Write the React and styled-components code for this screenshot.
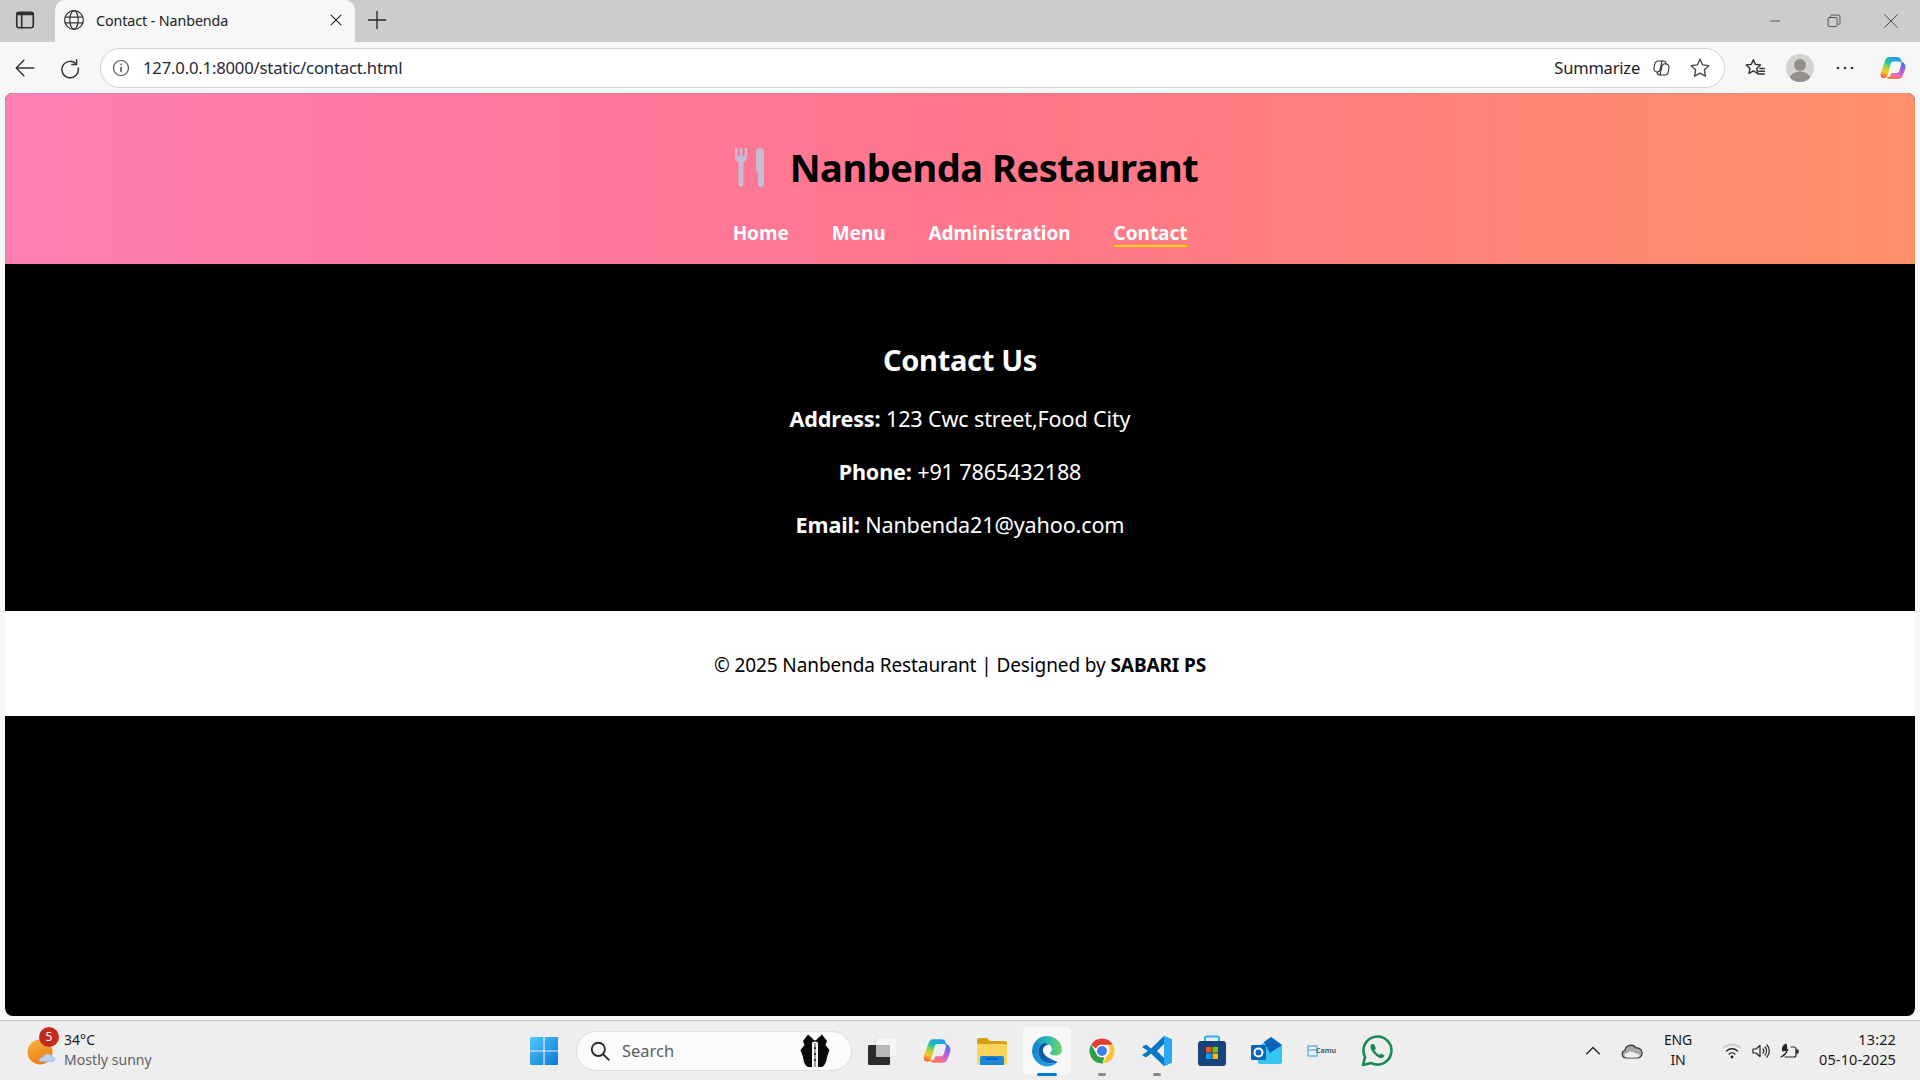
import styled, { createGlobalStyle } from "styled-components";

const GlobalStyle = createGlobalStyle`
  * { box-sizing: border-box; }
  html, body { margin: 0; padding: 0; height: 100%; }
  body { font-family: "Noto Sans", "Open Sans", sans-serif; background: #f7f7f7; overflow: hidden; }
`;

const Screen = styled.div`
  width: 1920px;
  height: 1080px;
  display: flex;
  flex-direction: column;
  background: #f7f7f7;
`;

const TabStrip = styled.div`
  height: 42px;
  flex: none;
  background: #cccccc;
  display: flex;
  align-items: flex-start;
  padding-left: 13px;
`;

const StripButton = styled.div`
  width: ${(p) => p.$w || 24}px;
  height: 42px;
  padding-bottom: 2px;
  display: flex;
  align-items: center;
  justify-content: center;
  flex: none;
`;

const Tab = styled.div`
  width: 300px;
  height: 42px;
  margin-left: 18px;
  margin-right: 8px;
  padding: 0 12px 2px 8px;
  background: #f7f7f7;
  border-radius: 10px 10px 0 0;
  display: flex;
  align-items: center;
  gap: 11px;
`;

const TabTitle = styled.span`
  flex: 1;
  font-size: 14.3px;
  color: #1c1c1c;
  letter-spacing: -0.1px;
`;

const WindowControls = styled.div`
  margin-left: auto;
  display: flex;
  height: 42px;
  align-items: center;
  gap: 43px;
  padding-right: 22px;
`;

const Toolbar = styled.div`
  height: 51px;
  flex: none;
  display: flex;
  align-items: center;
  padding: 0 12px 0 11px;
`;

const ToolButton = styled.div`
  width: ${(p) => p.$w || 28}px;
  height: 40px;
  margin-left: ${(p) => p.$ml || 0}px;
  margin-right: ${(p) => p.$mr || 0}px;
  display: flex;
  align-items: center;
  justify-content: center;
  flex: none;
`;

const AddressBar = styled.div`
  flex: 1;
  height: 40px;
  background: #ffffff;
  border: 1px solid #d0d0d0;
  border-radius: 20px;
  display: flex;
  align-items: center;
  padding: 0 8px 0 10px;
`;

const Url = styled.span`
  flex: 1;
  margin-left: 12px;
  font-size: 16.7px;
  color: #1f2937;
  letter-spacing: -0.2px;
`;

const Summarize = styled.span`
  font-size: 16.5px;
  color: #1c1c1c;
  letter-spacing: -0.2px;
  margin-right: 11px;
`;

const ToolIcons = styled.div`
  display: flex;
  align-items: center;
  margin-left: 14px;
`;

const Avatar = styled.div`
  width: 28px;
  height: 28px;
  margin: 0 15px 0 15px;
  border-radius: 50%;
  background: #d4d3d0;
  overflow: hidden;
  flex: none;
`;

const Page = styled.div`
  height: 923px;
  flex: none;
  margin: 0 5px;
  background: #000000;
  border-radius: 8px;
  overflow: hidden;
  display: flex;
  flex-direction: column;
`;

const Header = styled.header`
  height: 171px;
  flex: none;
  background: linear-gradient(90deg, #ff7eb3, #ff758c, #ff9068);
  display: flex;
  flex-direction: column;
  align-items: center;
  padding-top: 45px;
`;

const Brand = styled.div`
  display: flex;
  align-items: center;
  gap: 26px;
  height: 58px;
  padding-left: 13px;
`;

const Title = styled.h1`
  margin: 0;
  font-size: 38px;
  font-weight: 700;
  color: #000000;
  letter-spacing: -0.45px;
  line-height: 58px;
`;

const Nav = styled.nav`
  display: flex;
  gap: 43px;
  margin-top: 25px;
`;

const NavLink = styled.a`
  font-size: 19px;
  font-weight: 700;
  line-height: 24px;
  color: #ffffff;
  text-decoration: none;
  letter-spacing: -0.05px;
  border-bottom: 2px solid ${(p) => (p.$active ? "#ffd400" : "transparent")};
`;

const ContactSection = styled.main`
  height: 347px;
  flex: none;
  background: #000000;
  color: #ffffff;
  display: flex;
  flex-direction: column;
  align-items: center;
  padding-top: 74px;
`;

const Heading = styled.h2`
  margin: 0 0 22px;
  font-size: 29px;
  font-weight: 700;
  line-height: 44px;
  letter-spacing: -0.3px;
`;

const InfoLine = styled.p`
  margin: 0 0 23px;
  font-size: 21.6px;
  line-height: 30px;
  letter-spacing: -0.15px;
  strong { font-weight: 700; }
`;

const Footer = styled.footer`
  height: 105px;
  flex: none;
  background: #ffffff;
  color: #000000;
  display: flex;
  justify-content: center;
  padding-top: 40px;
  font-size: 19px;
  line-height: 28px;
  letter-spacing: -0.1px;
  strong { font-weight: 700; }
`;

const Taskbar = styled.div`
  margin-top: auto;
  height: 60px;
  flex: none;
  background: #eeeeee;
  border-top: 1px solid #c4c4c4;
  display: flex;
  align-items: center;
  position: relative;
`;

const Weather = styled.div`
  width: 527px;
  flex: none;
  display: flex;
  align-items: center;
  padding-left: 27px;
  gap: 7px;
`;

const WeatherIcon = styled.div`
  position: relative;
  width: 30px;
  height: 34px;
  flex: none;
`;

const Badge = styled.span`
  position: absolute;
  left: 12px;
  top: -7px;
  width: 20px;
  height: 20px;
  border-radius: 50%;
  background: #c42b1c;
  color: #fff;
  font-size: 12px;
  line-height: 20px;
  text-align: center;
`;

const WeatherText = styled.div`
  display: flex;
  flex-direction: column;
  margin-top: -2px;
  font-size: 14px;
  line-height: 20px;
  letter-spacing: 0.05px;
  color: #1a1a1a;
  span + span { color: #5f5f5f; }
`;

const Dock = styled.div`
  display: flex;
  align-items: center;
`;

const DockItem = styled.div`
  width: ${(p) => p.$w || 55}px;
  height: 48px;
  margin: 0 ${(p) => (p.$active ? 3.5 : 0)}px;
  position: relative;
  display: flex;
  align-items: center;
  justify-content: center;
  flex: none;
  border-radius: 5px;
  background: ${(p) => (p.$active ? "#f8f8f8" : "transparent")};
`;

const Dot = styled.span`
  position: absolute;
  bottom: -1px;
  left: 50%;
  transform: translateX(-50%);
  width: ${(p) => (p.$active ? 20 : 8)}px;
  height: 3px;
  border-radius: 2px;
  background: ${(p) => (p.$active ? "#0078d4" : "#8a8a8a")};
`;

const SearchBox = styled.div`
  width: 276px;
  height: 40px;
  margin: 0 2px 0 15px;
  flex: none;
  border-radius: 20px;
  background: #fbfbfb;
  border: 1px solid #dedede;
  display: flex;
  align-items: center;
  padding: 0 21px 0 12px;
  color: #5d5d5d;
  font-size: 16.5px;
  gap: 11px;
  span { flex: 1; }
`;

const CamuMark = styled.span`
  font-size: 7px;
  font-weight: 700;
  color: #4a6070;
  margin-left: -2px;
`;

const Tray = styled.div`
  margin-left: auto;
  display: flex;
  align-items: center;
  padding-right: 24px;
  color: #1a1a1a;
`;

const TraySpacer = styled.span`
  width: 19px;
`;

const Lang = styled.div`
  width: 40px;
  margin: -2px 24px 0 15px;
  text-align: center;
  font-size: 14px;
  line-height: 20px;
  letter-spacing: -0.2px;
`;

const Clock = styled.div`
  margin: -3px 0 0 19px;
  text-align: right;
  font-size: 14.5px;
  line-height: 20px;
  letter-spacing: 0.13px;
`;

const TrayIcons = styled.div`
  display: flex;
  align-items: center;
  gap: 9px;
`;

const Line = ({ size = 20, children, sw = 1.5, color = "#303030" }) => (
  <svg width={size} height={size} viewBox="0 0 20 20" fill="none" stroke={color} strokeWidth={sw} strokeLinecap="round" strokeLinejoin="round">
    {children}
  </svg>
);

const CopilotIcon = ({ size = 28 }) => (
  <svg width={size} height={size} viewBox="0 0 28 28">
    <defs>
      <linearGradient id={`cpl${size}`} x1="0.6" y1="0" x2="0.2" y2="1">
        <stop offset="0" stopColor="#1f9df2" />
        <stop offset="0.3" stopColor="#26c3a8" />
        <stop offset="0.55" stopColor="#a9d63a" />
        <stop offset="0.75" stopColor="#f7c62a" />
        <stop offset="1" stopColor="#f2603a" />
      </linearGradient>
      <linearGradient id={`cpr${size}`} x1="0.8" y1="0" x2="0.3" y2="1">
        <stop offset="0" stopColor="#3d74ea" />
        <stop offset="0.4" stopColor="#a85de6" />
        <stop offset="0.75" stopColor="#ee6aa8" />
        <stop offset="1" stopColor="#f4813a" />
      </linearGradient>
    </defs>
    <path d="M20 7.500c3-.5 6 1.500 6.500 4.500.2 1 0 2-.3 3L24 21c-.7 2.500-2.500 4-5 4h-8c-2 0-3.500-1-4-2.500 1 .7 3 .5 4-.5.8-.8 1.200-2 1.500-3h5c1.500 0 2.500-1 3-2.500l1.500-5c.6-2 .5-3.500-1-4.500z" fill={`url(#cpr${size})`} />
    <path d="M10 3h8c2 0 3.500 1 4 3l.8 3c-1-1-2-1.500-3.500-1.500H15c-2 0-3 1-3.500 3L9 20c-.7 2.500-2 4-4 4-2.500 0-4-2-3.200-5L6 7c.7-2.500 2-4 4-4z" fill={`url(#cpl${size})`} />
  </svg>
);

const WinLogo = () => (
  <svg width="30" height="30" viewBox="0 0 30 30">
    <defs>
      <linearGradient id="winA" x1="0" y1="0" x2="1" y2="1">
        <stop offset="0" stopColor="#52c8fa" />
        <stop offset="1" stopColor="#0a78d8" />
      </linearGradient>
    </defs>
    <path d="M1 2a1 1 0 0 1 1-1h12.400v13.400H1zM15.600 1H28a1 1 0 0 1 1 1v12.400H15.600zM1 15.600h13.400V29H2a1 1 0 0 1-1-1zM15.600 15.600H29V28a1 1 0 0 1-1 1H15.600z" fill="url(#winA)" />
  </svg>
);

const Tuxedo = () => (
  <svg width="30" height="33" viewBox="0 0 30 33">
    <path d="M8 0.500L13 5 12 12v21H8C4.500 31 3.500 27 3 23L0.500 16 4.500 11 3 7z" fill="#0a0a0a" />
    <path d="M22 0.500L17 5l1 7v21h4c3.500-2 4.500-6 5-10l2.500-7-4-5L27 7z" fill="#0a0a0a" />
    <path d="M12 8.500h6V33h-6z" fill="#f4f4f4" />
    <path d="M14.200 9h1.600v24h-1.600z" fill="#8c8c8c" />
    <path d="M8.500 3L15 6.500 21.500 3 21 9 15 7.500 9 9z" fill="#0a0a0a" />
    <circle cx="15" cy="14" r="1" fill="#111" />
    <circle cx="15" cy="20" r="1" fill="#111" />
    <circle cx="15" cy="26" r="1" fill="#111" />
  </svg>
);

const TaskView = () => (
  <svg width="30" height="30" viewBox="0 0 30 30">
    <rect x="9" y="1" width="21" height="20" rx="1" fill="#f5f5f5" stroke="#e2e2e2" />
    <rect x="1" y="9" width="22" height="20" rx="1.500" fill="#2c2c2c" />
    <rect x="9" y="9" width="14" height="12" fill="#b8b8b8" />
  </svg>
);

const FilesIcon = () => (
  <svg width="30" height="28" viewBox="0 0 30 28">
    <path d="M0 3a2 2 0 0 1 2-2h8l3 3h15a2 2 0 0 1 2 2v3H0z" fill="#d99f12" />
    <path d="M0 7h28a2 2 0 0 1 2 2v17a2 2 0 0 1-2 2H2a2 2 0 0 1-2-2z" fill="#fbd45c" />
    <path d="M5 19h20a2 2 0 0 1 2 2v7H3v-7a2 2 0 0 1 2-2z" fill="#1f87d8" />
    <path d="M9 22h12" stroke="#0c5da8" strokeWidth="1.600" />
  </svg>
);

const EdgeIcon = () => (
  <svg width="32" height="32" viewBox="0 0 32 32">
    <defs>
      <linearGradient id="edgeA" x1="0" y1="0.400" x2="1" y2="0.400">
        <stop offset="0" stopColor="#1583d0" />
        <stop offset="0.55" stopColor="#2cbcb0" />
        <stop offset="1" stopColor="#74d95a" />
      </linearGradient>
      <linearGradient id="edgeB" x1="0" y1="0" x2="1" y2="1">
        <stop offset="0" stopColor="#0d4f96" />
        <stop offset="1" stopColor="#0c6cc0" />
      </linearGradient>
      <linearGradient id="edgeC" x1="0" y1="0" x2="1" y2="1">
        <stop offset="0" stopColor="#0f7fd0" />
        <stop offset="1" stopColor="#25a8e8" />
      </linearGradient>
    </defs>
    <path d="M16 1C25 1 31 8 31 15c0 3.500-3 5.500-7 5.500-2.500 0-5-1-5-2.500 0-1 2-1.500 2-4 0-3.500-4-6-8-6C7 8 2 12 1 16 1.500 7 8 1 16 1z" fill="url(#edgeA)" />
    <path d="M1 16C2 11 7 8 13 8c-4 2-6.500 6-5.500 11 1 6 7 10 13 9.500 2 0 4-.5 6-1.500-3 3-7 4.500-11 4.500C8 31 1 24 1 16z" fill="url(#edgeC)" />
    <path d="M7.500 19C6.500 14 9 10 13 8c1.500 0 3.500.5 5 1.500-4 .5-6.500 3-6 6.500.5 4.500 7 8.500 15 11-2 1-4.500 1.500-6.500 1.500-6 .5-12-3.500-13-9.500z" fill="url(#edgeB)" />
  </svg>
);

const ChromeIcon = () => (
  <svg width="30" height="30" viewBox="0 0 48 48">
    <path d="M24 4a20 20 0 0 1 17.320 10H24a10 10 0 0 0-9.300 6.300L6.700 14A20 20 0 0 1 24 4z" fill="#e33b2e" />
    <path d="M41.320 14A20 20 0 0 1 25 44l8-14a10 10 0 0 0 0-16z" fill="#fbc52f" />
    <path d="M6.700 14l8.700 15a10 10 0 0 0 12 4.500L25 44A20 20 0 0 1 6.700 14z" fill="#2f9e48" />
    <circle cx="24" cy="24" r="10" fill="#ffffff" />
    <circle cx="24" cy="24" r="8" fill="#3d7fe8" />
  </svg>
);

const VSCodeIcon = () => (
  <svg width="32" height="32" viewBox="0 0 32 32">
    <path d="M23 1l8 3.500v23L23 31 10 18.500l-5 4L1 20l6-4-6-4 4-2.500 5 4z" fill="#0a78c8" />
    <path d="M23 1l8 3.500v23L23 31z" fill="#2aa8f2" />
    <path d="M23 9l-7 7 7 7z" fill="#eeeeee" />
  </svg>
);

const StoreIcon = () => (
  <svg width="30" height="32" viewBox="0 0 30 32">
    <path d="M8 8V3a1.500 1.500 0 0 1 1.500-1.500h11A1.500 1.500 0 0 1 22 3v5" fill="none" stroke="#2bb0f0" strokeWidth="2" />
    <rect x="1" y="6" width="28" height="25" rx="3" fill="#17427c" />
    <rect x="9" y="12" width="5.500" height="5.500" fill="#f25022" />
    <rect x="15.500" y="12" width="5.500" height="5.500" fill="#7fba00" />
    <rect x="9" y="18.500" width="5.500" height="5.500" fill="#00a4ef" />
    <rect x="15.500" y="18.500" width="5.500" height="5.500" fill="#ffb900" />
  </svg>
);

const OutlookIcon = () => (
  <svg width="32" height="30" viewBox="0 0 32 30">
    <path d="M6 12L20 1l11 8v17a2 2 0 0 1-2 2H9a2 2 0 0 1-2-2z" fill="#35c5f0" />
    <path d="M13 6l7-5 11 8-12 8z" fill="#0a64b8" />
    <rect x="0" y="9" width="15" height="15" rx="1.500" fill="#0a64b8" />
    <circle cx="7.500" cy="16.500" r="4" fill="none" stroke="#ffffff" strokeWidth="2" />
  </svg>
);

const WhatsAppIcon = () => (
  <svg width="32" height="32" viewBox="0 0 32 32">
    <path d="M2 30l2-8A14 14 0 1 1 10 28z" fill="none" stroke="#1a8a55" strokeWidth="2.600" strokeLinejoin="round" />
    <path d="M11 9c-2 1-2 4 0 7s5 6 8 7c2 .5 4-.5 4.500-2.500l-3.500-2-1.500 1.500c-2-1-4-3-5-5l1.500-1.500-2-4.500z" fill="#1a8a55" />
  </svg>
);

export default function App() {
  return (
    <>
      <GlobalStyle />
      <Screen>
        <TabStrip>
          <StripButton $w={24}>
            <Line size={22}>
              <rect x="2.500" y="3" width="15" height="14" rx="2" />
              <path d="M7 3v14" />
              <path d="M3 4.500h14" strokeWidth="2.400" />
            </Line>
          </StripButton>
          <Tab>
            <Line size={22} sw={1.100}>
              <circle cx="10" cy="10" r="8.500" />
              <ellipse cx="10" cy="10" rx="3.800" ry="8.500" />
              <path d="M2 7.300h16M2 12.700h16" />
            </Line>
            <TabTitle>Contact - Nanbenda</TabTitle>
            <Line size={14} sw={1.500} color="#1c1c1c">
              <path d="M3 3l14 14M17 3L3 17" />
            </Line>
          </Tab>
          <StripButton $w={28}>
            <Line size={20} sw={1.300} color="#222">
              <path d="M10 1.500v17M1.500 10h17" />
            </Line>
          </StripButton>
          <WindowControls>
            <Line size={14} sw={1.100} color="#333">
              <path d="M1 10h13" />
            </Line>
            <Line size={14} sw={1.100} color="#333">
              <rect x="1.500" y="5" width="13" height="13" rx="2" />
              <path d="M5 3.500c0-1 .8-2 2-2h9a2.500 2.500 0 0 1 2.500 2.500v9c0 1-.8 2-1.800 2" />
            </Line>
            <Line size={14} sw={1.200} color="#333">
              <path d="M1 1l18 18M19 1L1 19" />
            </Line>
          </WindowControls>
        </TabStrip>
        <Toolbar>
          <ToolButton $mr={17}>
            <Line size={22} sw={1.300} color="#333">
              <path d="M18 10H2M9 3l-7 7 7 7" />
            </Line>
          </ToolButton>
          <ToolButton $mr={16}>
            <Line size={22} sw={1.300} color="#333">
              <path d="M16 2.500v4.300h-4.300" />
              <path d="M15.800 6.500A7.500 7.500 0 1 0 17.500 10" />
            </Line>
          </ToolButton>
          <AddressBar>
            <Line size={20} sw={1.200} color="#555">
              <circle cx="10" cy="10" r="7.500" />
              <path d="M10 9.500v4M10 6.300v.3" strokeWidth="1.600" />
            </Line>
            <Url>127.0.0.1:8000/static/contact.html</Url>
            <Summarize>Summarize</Summarize>
            <Line size={20} sw={1.100} color="#333">
              <path d="M7 3h5a3 3 0 0 1 3 3c2 0 3 2 3 4l-1 5a3 3 0 0 1-3 2H9a3 3 0 0 1-3-3c-2 0-3.500-2-3-4l1-5a3.500 3.500 0 0 1 3-2z" />
              <path d="M9 17l2-9a3 3 0 0 1 4-2M11 3L9 12a3 3 0 0 1-3 2" />
            </Line>
            <ToolButton $w={32} $ml={13}>
              <Line size={22} sw={1.200} color="#444">
                <path d="M10 2l2.400 5.200 5.600.7-4.100 3.900 1.100 5.600L10 14.600l-5 2.800 1.100-5.600L2 7.900l5.600-.7z" />
              </Line>
            </ToolButton>
          </AddressBar>
          <ToolIcons>
            <ToolButton $w={32}>
              <Line size={22} sw={1.300} color="#333">
                <path d="M8.500 2.500l1.900 4.200 4.600.5-3.400 3.200.9 4.600-4-2.300-4 2.300.9-4.600L2 7.200l4.600-.5z" />
                <path d="M14.500 10.500h4M13.500 13h5M12.500 15.500h6" />
              </Line>
            </ToolButton>
            <Avatar>
              <svg width="28" height="28" viewBox="0 0 28 28">
                <circle cx="14" cy="11" r="6" fill="#93908b" />
                <ellipse cx="14" cy="24" rx="10" ry="6.500" fill="#93908b" />
              </svg>
            </Avatar>
            <ToolButton $w={32} $mr={17}>
              <svg width="18" height="4" viewBox="0 0 18 4" fill="#333">
                <circle cx="2" cy="2" r="1.300" />
                <circle cx="9" cy="2" r="1.300" />
                <circle cx="16" cy="2" r="1.300" />
              </svg>
            </ToolButton>
            <ToolButton $w={30}>
              <CopilotIcon />
            </ToolButton>
          </ToolIcons>
        </Toolbar>
        <Page>
          <Header>
            <Brand>
              <svg width="29" height="40" viewBox="0 0 29 40" fill="#c6bdd4">
                <path d="M0 1h2.400v8h2.400V1h2.400v8h2.400V1H12v10c0 2-1.500 3.500-3.500 4V37a2.500 2.500 0 0 1-5 0V15C1.500 14.500 0 13 0 11z" />
                <path d="M21 5c0-2.500 2-4 4-4s4 1.500 4 4v32a3 3 0 0 1-6 0V25h-.5c-1 0-1.500-1-1.500-2z" />
              </svg>
              <Title>Nanbenda Restaurant</Title>
            </Brand>
            <Nav>
              <NavLink>Home</NavLink>
              <NavLink>Menu</NavLink>
              <NavLink>Administration</NavLink>
              <NavLink $active>Contact</NavLink>
            </Nav>
          </Header>
          <ContactSection>
            <Heading>Contact Us</Heading>
            <InfoLine>
              <strong>Address:</strong> 123 Cwc street,Food City
            </InfoLine>
            <InfoLine>
              <strong>Phone:</strong> +91 7865432188
            </InfoLine>
            <InfoLine>
              <strong>Email:</strong> Nanbenda21@yahoo.com
            </InfoLine>
          </ContactSection>
          <Footer>
            <span>
              © 2025 Nanbenda Restaurant | Designed by <strong>SABARI PS</strong>
            </span>
          </Footer>
        </Page>
        <Taskbar>
          <Weather>
            <WeatherIcon>
              <svg width="30" height="34" viewBox="0 0 30 34">
                <defs>
                  <linearGradient id="sunA" x1="0" y1="0" x2="0.4" y2="1">
                    <stop offset="0" stopColor="#f6b73c" />
                    <stop offset="1" stopColor="#f47a18" />
                  </linearGradient>
                </defs>
                <circle cx="13" cy="18" r="12.500" fill="url(#sunA)" />
                <path d="M12 27c0-2 1.500-3.500 3.500-3.500 1-2 3-3.500 5-3.500 3 0 4 1.500 4.500 3 2.500 0 3 2 3 2.500 0 1-1 2-3 2H14c-1 0-2-.5-2-1.500z" fill="#b9d4f2" stroke="#8fb5e0" strokeWidth="0.600" />
              </svg>
              <Badge>5</Badge>
            </WeatherIcon>
            <WeatherText>
              <span>34°C</span>
              <span>Mostly sunny</span>
            </WeatherText>
          </Weather>
          <Dock>
            <DockItem $w={34}>
              <WinLogo />
            </DockItem>
            <SearchBox>
              <Line size={22} sw={1.700} color="#2b2b2b">
                <circle cx="8.500" cy="8.500" r="6" />
                <path d="M13 13l5 5" />
              </Line>
              <span>Search</span>
              <Tuxedo />
            </SearchBox>
            <DockItem>
              <TaskView />
            </DockItem>
            <DockItem>
              <CopilotIcon size={30} />
            </DockItem>
            <DockItem>
              <FilesIcon />
            </DockItem>
            <DockItem $active $w={48}>
              <EdgeIcon />
              <Dot $active />
            </DockItem>
            <DockItem>
              <ChromeIcon />
              <Dot />
            </DockItem>
            <DockItem>
              <VSCodeIcon />
              <Dot />
            </DockItem>
            <DockItem>
              <StoreIcon />
            </DockItem>
            <DockItem>
              <OutlookIcon />
            </DockItem>
            <DockItem>
              <svg width="11" height="12" viewBox="0 0 11 12" fill="none" stroke="#56b0ea" strokeWidth="1.300">
                <rect x="1" y="1" width="9" height="10" />
                <path d="M1 5h9" />
              </svg>
              <CamuMark>Camu</CamuMark>
            </DockItem>
            <DockItem>
              <WhatsAppIcon />
            </DockItem>
          </Dock>
          <Tray>
            <Line size={18} sw={1.500} color="#222">
              <path d="M3 13l7-7 7 7" />
            </Line>
            <TraySpacer />
            <svg width="22" height="16" viewBox="0 0 22 16">
              <path d="M5 15a4 4 0 0 1-1-7.800A6 6 0 0 1 15 5a4.500 4.500 0 0 1 2 10z" fill="#a8a8a8" stroke="#333" strokeWidth="1.200" />
              <path d="M3 11.500l6-3 4 1 6 2.500-2 2.400H5z" fill="#eeeeee" />
            </svg>
            <Lang>
              ENG
              <br />
              IN
            </Lang>
            <TrayIcons>
              <Line size={20} sw={1.400} color="#222">
                <path d="M1.500 7a12 12 0 0 1 17 0" stroke="#c8c8c8" />
                <path d="M4.500 10a8 8 0 0 1 11 0M7.200 13a4 4 0 0 1 5.600 0" />
                <circle cx="10" cy="16" r="0.700" />
              </Line>
              <Line size={20} sw={1.200} color="#222">
                <path d="M2 8v4h3l4 3.500v-11L5 8z" />
                <path d="M12 8a3 3 0 0 1 0 4M14 6a6 6 0 0 1 0 8M16 4a9 9 0 0 1 0 12" />
              </Line>
              <Line size={20} sw={1.200} color="#222">
                <path d="M5 16h9a2 2 0 0 0 2-2V8a2 2 0 0 0-2-2h-3" />
                <path d="M16.500 9h1.500v3h-1.500" fill="#222" />
                <path d="M1 16c2-1 6-3 6-7L6 3C3 5 2 8 3 10l5-1" fill="#222" />
              </Line>
            </TrayIcons>
            <Clock>
              13:22
              <br />
              05-10-2025
            </Clock>
          </Tray>
        </Taskbar>
      </Screen>
    </>
  );
}
